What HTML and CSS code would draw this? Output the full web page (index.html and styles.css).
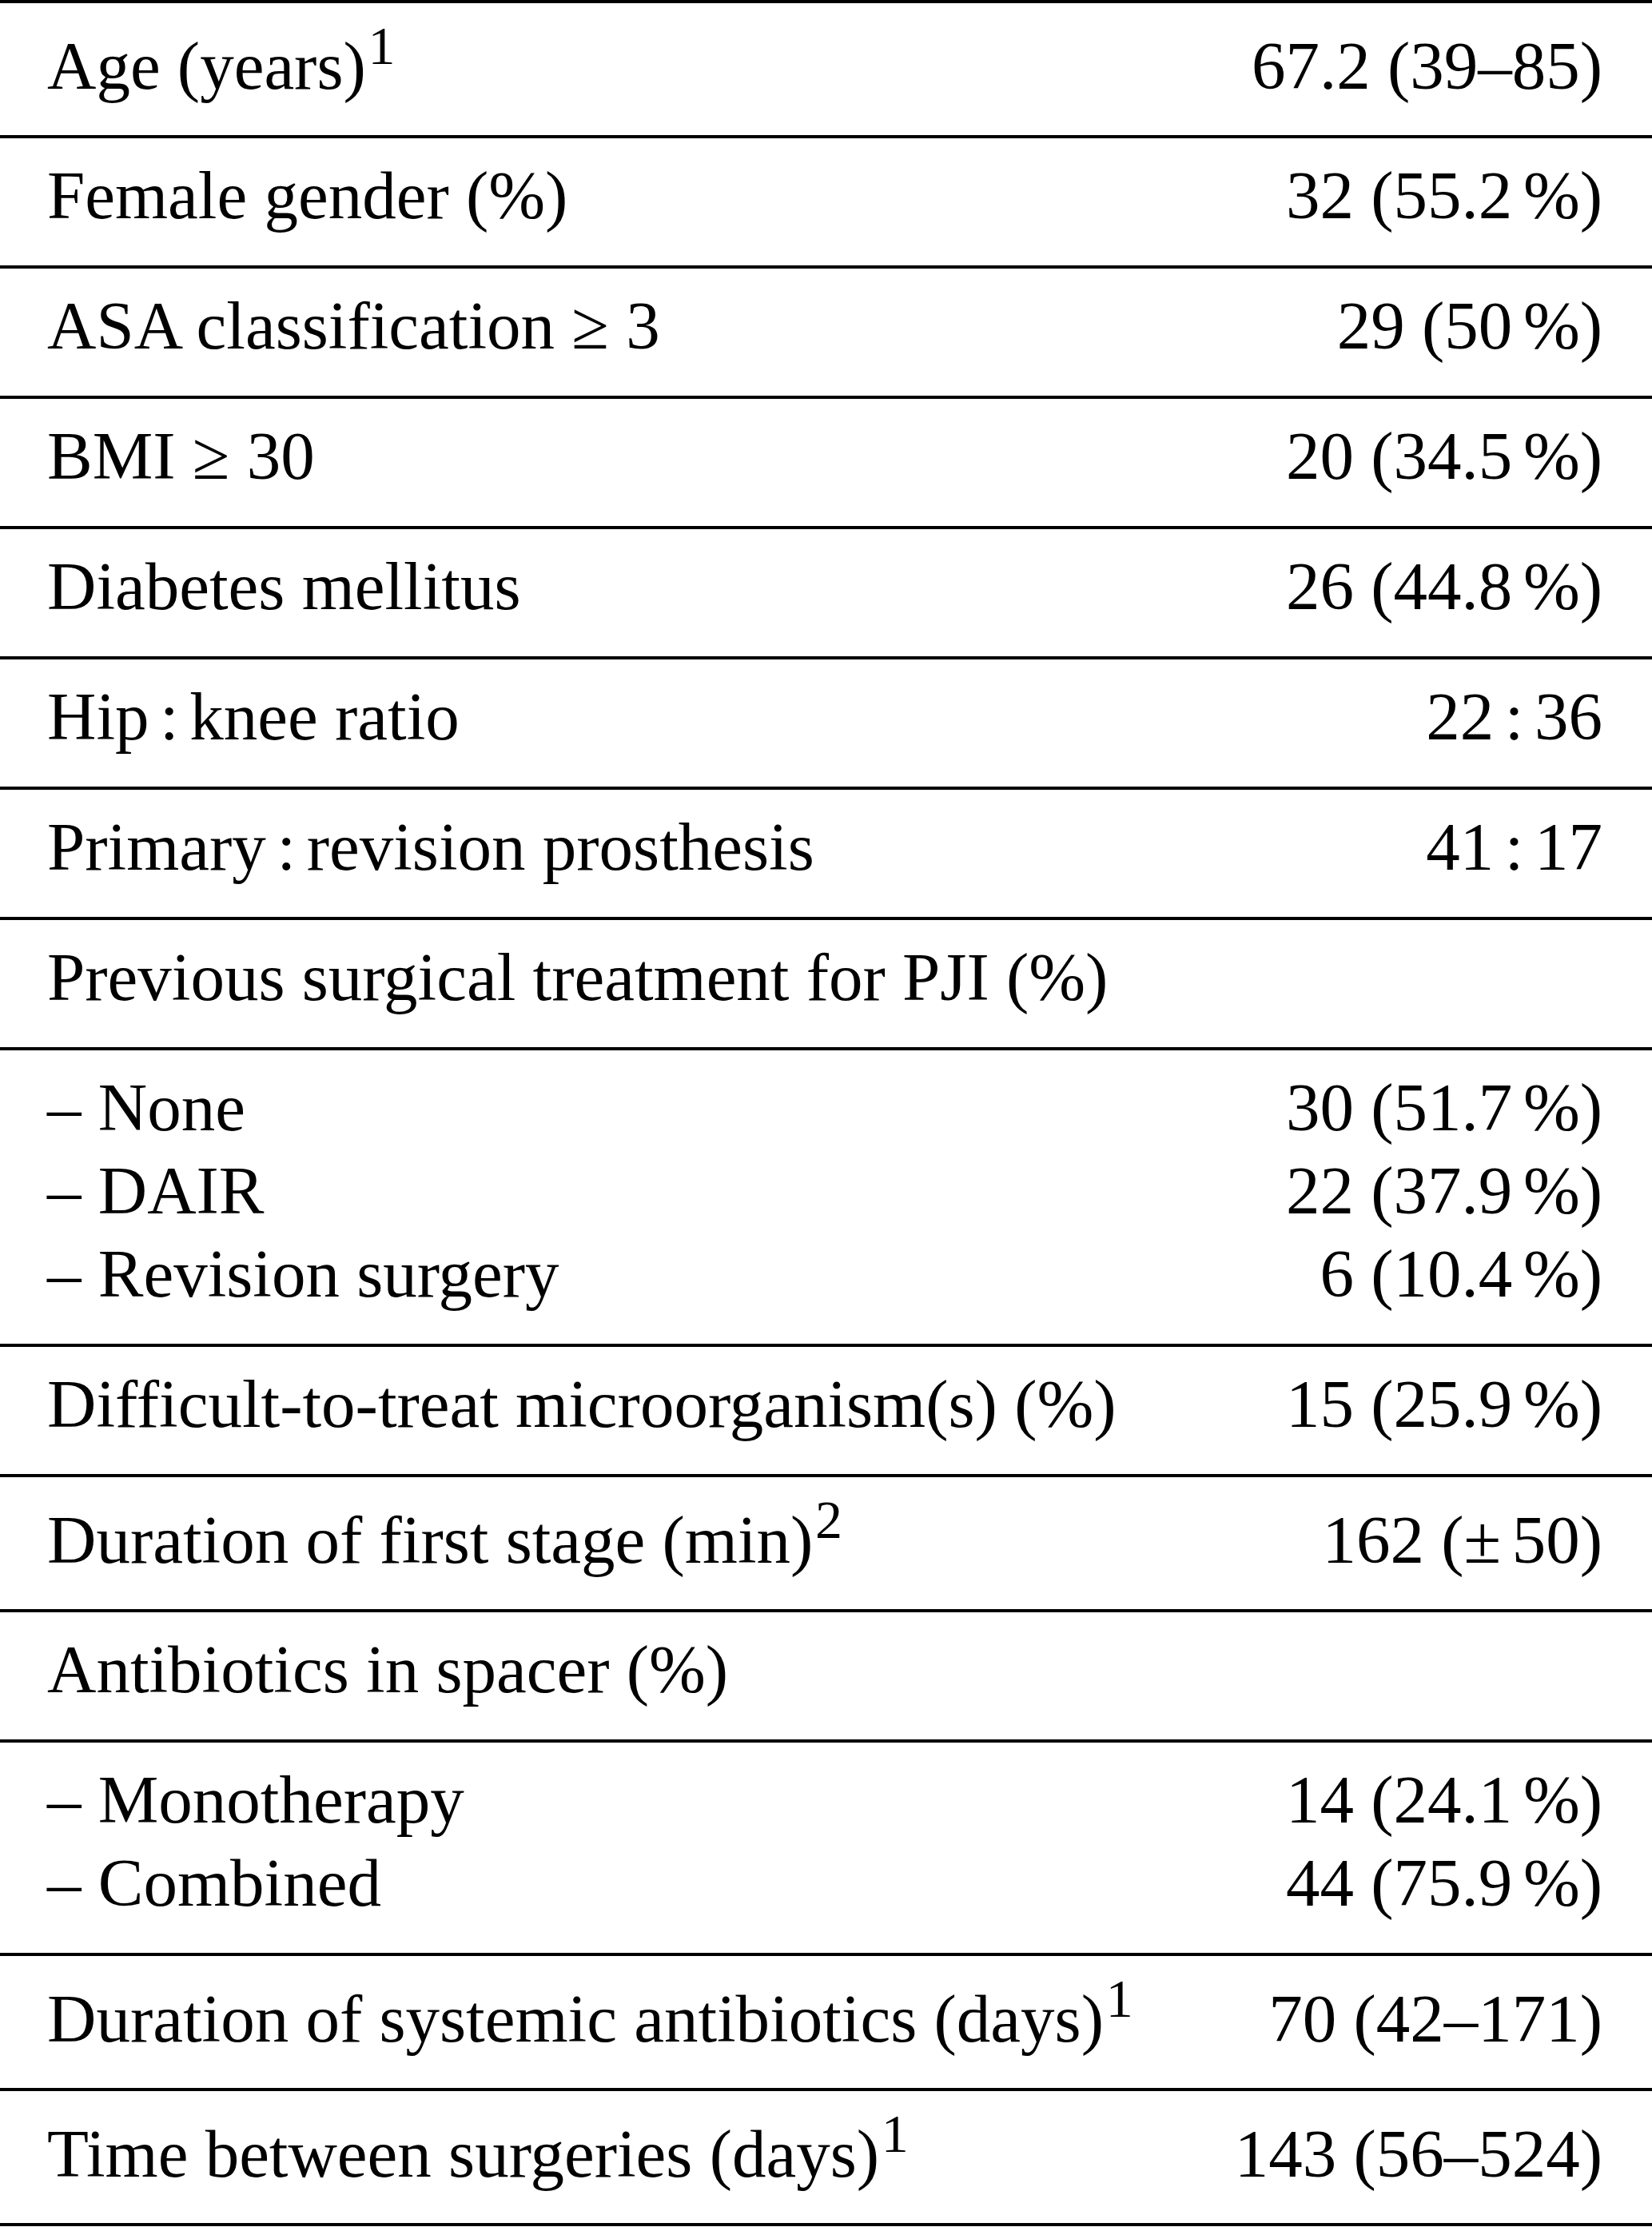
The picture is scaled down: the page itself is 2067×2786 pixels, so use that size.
FILE: index.html
```html
<!DOCTYPE html>
<html lang="en">
<head>
<meta charset="utf-8">
<title>Patient characteristics</title>
<link rel="stylesheet" href="styles.css">
</head>
<body>
<div class="table">
  <div class="row sup-row">
    <div class="label">Age (years)<sup class="note">1</sup></div>
    <div class="value">67.2 (39–85)</div>
  </div>
  <div class="row">
    <div class="label">Female gender (%)</div>
    <div class="value">32 (55.2<span class="thin"></span>%)</div>
  </div>
  <div class="row">
    <div class="label">ASA classification ≥ 3</div>
    <div class="value">29 (50<span class="thin"></span>%)</div>
  </div>
  <div class="row">
    <div class="label">BMI ≥ 30</div>
    <div class="value">20 (34.5<span class="thin"></span>%)</div>
  </div>
  <div class="row">
    <div class="label">Diabetes mellitus</div>
    <div class="value">26 (44.8<span class="thin"></span>%)</div>
  </div>
  <div class="row">
    <div class="label">Hip<span class="thin"></span>:<span class="thin"></span>knee ratio</div>
    <div class="value">22<span class="thin"></span>:<span class="thin"></span>36</div>
  </div>
  <div class="row">
    <div class="label">Primary<span class="thin"></span>:<span class="thin"></span>revision prosthesis</div>
    <div class="value">41<span class="thin"></span>:<span class="thin"></span>17</div>
  </div>
  <div class="row">
    <div class="label">Previous surgical treatment for PJI (%)</div>
    <div class="value"></div>
  </div>
  <div class="row">
    <div class="label">– None</div>
    <div class="value">30 (51.7<span class="thin"></span>%)</div>
    <div class="label">– DAIR</div>
    <div class="value">22 (37.9<span class="thin"></span>%)</div>
    <div class="label">– Revision surgery</div>
    <div class="value">6 (10.4<span class="thin"></span>%)</div>
  </div>
  <div class="row">
    <div class="label">Difficult-to-treat microorganism(s) (%)</div>
    <div class="value">15 (25.9<span class="thin"></span>%)</div>
  </div>
  <div class="row sup-row">
    <div class="label">Duration of first stage (min)<sup class="note">2</sup></div>
    <div class="value">162 (±<span class="thin"></span>50)</div>
  </div>
  <div class="row">
    <div class="label">Antibiotics in spacer (%)</div>
    <div class="value"></div>
  </div>
  <div class="row">
    <div class="label">– Monotherapy</div>
    <div class="value">14 (24.1<span class="thin"></span>%)</div>
    <div class="label">– Combined</div>
    <div class="value">44 (75.9<span class="thin"></span>%)</div>
  </div>
  <div class="row sup-row">
    <div class="label">Duration of systemic antibiotics (days)<sup class="note">1</sup></div>
    <div class="value">70 (42–171)</div>
  </div>
  <div class="row sup-row">
    <div class="label">Time between surgeries (days)<sup class="note">1</sup></div>
    <div class="value">143 (56–524)</div>
  </div>
</div>
</body>
</html>
```

FILE: styles.css
```css
html, body {
  margin: 0;
  padding: 0;
  background: #ffffff;
}

body {
  font-family: "Liberation Serif", "Times New Roman", serif;
  font-size: 85px;
  line-height: 104px;
  color: #000000;
}

.table {
  width: 2067px;
  border-top: 4px solid #000000;
}

.row {
  display: grid;
  grid-template-columns: 1fr auto;
  padding: 19px 62px 36px 59px;
  border-bottom: 4px solid #000000;
}

.row.sup-row {
  padding-top: 26px;
  padding-bottom: 35px;
}

.label {
  white-space: nowrap;
}

.value {
  text-align: right;
  white-space: nowrap;
}

.thin {
  display: inline-block;
  width: 0.16em;
}

.note {
  font-size: 0.8em;
  line-height: 0;
  vertical-align: 0.45em;
  margin-left: 0.04em;
}
```
